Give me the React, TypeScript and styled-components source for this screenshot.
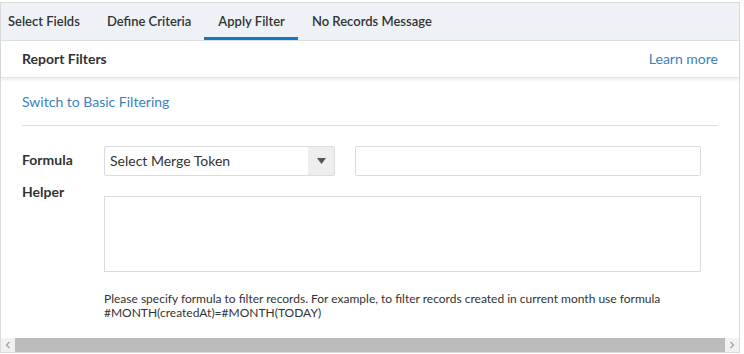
import React from "react";
import styled, { createGlobalStyle } from "styled-components";

const GlobalStyle = createGlobalStyle`
  html, body {
    margin: 0;
    padding: 0;
    background: #ffffff;
    font-family: Lato, "Open Sans", Arial, sans-serif;
    color: #333333;
  }
`;

const Frame = styled.div`
  width: 738px;
  margin-top: 2px;
  border: 1px solid #dadada;
  border-bottom: none;
  background: #fff;
`;

const TabBar = styled.div`
  display: flex;
  height: 37px;
  background: #eef2f6;
  border-bottom: 1px solid #dcdfe3;
`;

const Tab = styled.div<{ $active?: boolean; $first?: boolean }>`
  display: flex;
  align-items: center;
  padding: 0 13px 0 ${(p) => (p.$first ? "7px" : "14px")};
  font-size: 13px;
  font-weight: 600;
  color: #333;
  box-sizing: border-box;
  border-bottom: 3px solid ${(p) => (p.$active ? "#0f78c8" : "transparent")};
  padding-top: 2px;
`;

const PanelHeader = styled.div`
  display: flex;
  align-items: center;
  justify-content: space-between;
  height: 35px;
  padding: 0 21px 1px;
  border-bottom: 1px solid #e4e4e4;
  box-shadow: 0 2px 3px rgba(0, 0, 0, 0.08);
`;

const HeaderTitle = styled.div`
  font-size: 14px;
  font-weight: 700;
  color: #333;
`;

const Link = styled.a`
  font-size: 14px;
  color: #3b7fc0;
  text-decoration: none;
  cursor: pointer;
`;

const Body = styled.div`
  padding: 15px 21px 0 21px;
  height: 245px;
`;

const SwitchRow = styled.div`
  height: 16px;
  padding-bottom: 16px;
  border-bottom: 1px solid #dcdcdc;
  margin-bottom: 20px;
  display: flex;
  align-items: center;
`;

const FormGrid = styled.div`
  display: grid;
  grid-template-columns: 82px 1fr;
  width: 679px;
`;

const Label = styled.div<{ $top?: number }>`
  font-size: 14px;
  font-weight: 700;
  color: #333;
  line-height: 16px;
  align-self: ${(p) => (p.$top !== undefined ? "start" : "center")};
  margin-top: ${(p) => p.$top ?? 0}px;
  padding-bottom: ${(p) => (p.$top !== undefined ? 0 : 2)}px;
`;

const ControlRow = styled.div`
  display: flex;
  gap: 20px;
  height: 30px;
`;

const Select = styled.div`
  width: 231px;
  display: flex;
  border: 1px solid #dcdcdc;
  border-radius: 2px;
  box-sizing: border-box;
`;

const SelectText = styled.div`
  flex: 1;
  display: flex;
  align-items: center;
  padding: 0 0 2px 5px;
  font-size: 14px;
  color: #333;
`;

const SelectArrow = styled.div`
  width: 26px;
  background: #eeeeee;
  display: flex;
  align-items: center;
  justify-content: center;
`;

const TextInput = styled.div`
  width: 346px;
  border: 1px solid #dcdcdc;
  border-radius: 2px;
  box-sizing: border-box;
`;

const TextArea = styled.div`
  margin-top: 20px;
  width: 597px;
  height: 76px;
  border: 1px solid #dcdcdc;
  box-sizing: border-box;
`;

const Hint = styled.div`
  grid-column: 2;
  margin-top: 20px;
  font-size: 12px;
  line-height: 14px;
  color: #333;
`;

const ScrollBar = styled.div`
  display: flex;
  height: 14px;
  background: #f1f1f1;
  border-bottom: 1px solid #dadada;
`;

const ScrollButton = styled.div`
  width: 14px;
  display: flex;
  align-items: center;
  justify-content: center;
  background: #f1f1f1;
`;

const ScrollThumb = styled.div`
  flex: 1;
  background: #bcbcbc;
`;

const Chevron: React.FC<{ dir: "left" | "right" }> = ({ dir }) => (
  <svg width="6" height="8" viewBox="0 0 6 8">
    <path
      d={dir === "left" ? "M4.5 1 L1.5 4 L4.5 7" : "M1.5 1 L4.5 4 L1.5 7"}
      fill="none"
      stroke="#a3a3a3"
      strokeWidth="1.3"
    />
  </svg>
);

const tabs = ["Select Fields", "Define Criteria", "Apply Filter", "No Records Message"];

const App: React.FC = () => {
  return (
    <>
      <GlobalStyle />
      <Frame>
        <TabBar>
          {tabs.map((t, i) => (
            <Tab key={t} $first={i === 0} $active={t === "Apply Filter"}>
              {t}
            </Tab>
          ))}
        </TabBar>
        <PanelHeader>
          <HeaderTitle>Report Filters</HeaderTitle>
          <Link>Learn more</Link>
        </PanelHeader>
        <Body>
          <SwitchRow>
            <Link>Switch to Basic Filtering</Link>
          </SwitchRow>
          <FormGrid>
            <Label>Formula</Label>
            <ControlRow>
              <Select>
                <SelectText>Select Merge Token</SelectText>
                <SelectArrow>
                  <svg width="9" height="6" viewBox="0 0 9 6">
                    <path d="M0 0 H9 L4.5 6 Z" fill="#555" />
                  </svg>
                </SelectArrow>
              </Select>
              <TextInput />
            </ControlRow>
            <Label $top={8}>Helper</Label>
            <TextArea />
            <Hint>
              Please specify formula to filter records. For example, to filter records created in current month use formula
              <br />
              #MONTH(createdAt)=#MONTH(TODAY)
            </Hint>
          </FormGrid>
        </Body>
        <ScrollBar>
          <ScrollButton>
            <Chevron dir="left" />
          </ScrollButton>
          <ScrollThumb />
          <ScrollButton>
            <Chevron dir="right" />
          </ScrollButton>
        </ScrollBar>
      </Frame>
    </>
  );
};

export default App;
